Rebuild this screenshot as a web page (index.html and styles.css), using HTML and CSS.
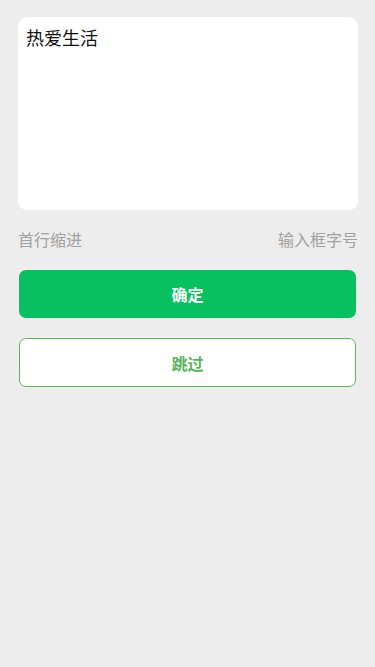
FILE: index.html
```html
<!DOCTYPE html>
<html lang="zh-CN">
<head>
    <meta charset="UTF-8">
    <meta name="viewport" content="width=device-width, initial-scale=1.0">
    <title>输入框</title>
    <link rel="stylesheet" href="styles.css">
</head>
<body>
    <div class="page">
        <!-- Text area card -->
        <div class="textarea-card">热爱生活</div>

        <!-- Options row -->
        <div class="options">
            <span>首行缩进</span>
            <span>输入框字号</span>
        </div>

        <!-- Buttons -->
        <button class="btn btn-primary">确定</button>
        <button class="btn btn-ghost">跳过</button>
    </div>
</body>
</html>
```

FILE: styles.css
```css
* {
    margin: 0;
    padding: 0;
    box-sizing: border-box;
}

body {
    background-color: #ededed;
    font-family: "Noto Sans CJK SC", "Microsoft YaHei", sans-serif;
    height: 667px;
}

.page {
    padding: 17px 17px 0 18px;
    display: flex;
    flex-direction: column;
}

/* Text area card */
.textarea-card {
    background-color: #fff;
    border-radius: 9px;
    height: 193px;
    padding: 7px 8px;
    font-size: 18px;
    line-height: 26px;
    color: #111;
}

.options {
    display: flex;
    justify-content: space-between;
    margin-top: 18px;
    font-size: 16px;
    line-height: 22px;
    color: #a0a0a0;
}

/* Button styling */
.btn {
    width: 337px;
    margin-left: 1px;
    height: 48px;
    border-radius: 7px;
    font-family: inherit;
    font-size: 16px;
    font-weight: bold;
    cursor: pointer;
}

.btn-primary {
    margin-top: 20px;
    background-color: #07c160;
    color: #fff;
    border: none;
}

.btn-ghost {
    margin-top: 20px;
    height: 49px;
    background-color: #fff;
    color: #5ab55e;
    border: 1px solid #5ab55e;
}
```
